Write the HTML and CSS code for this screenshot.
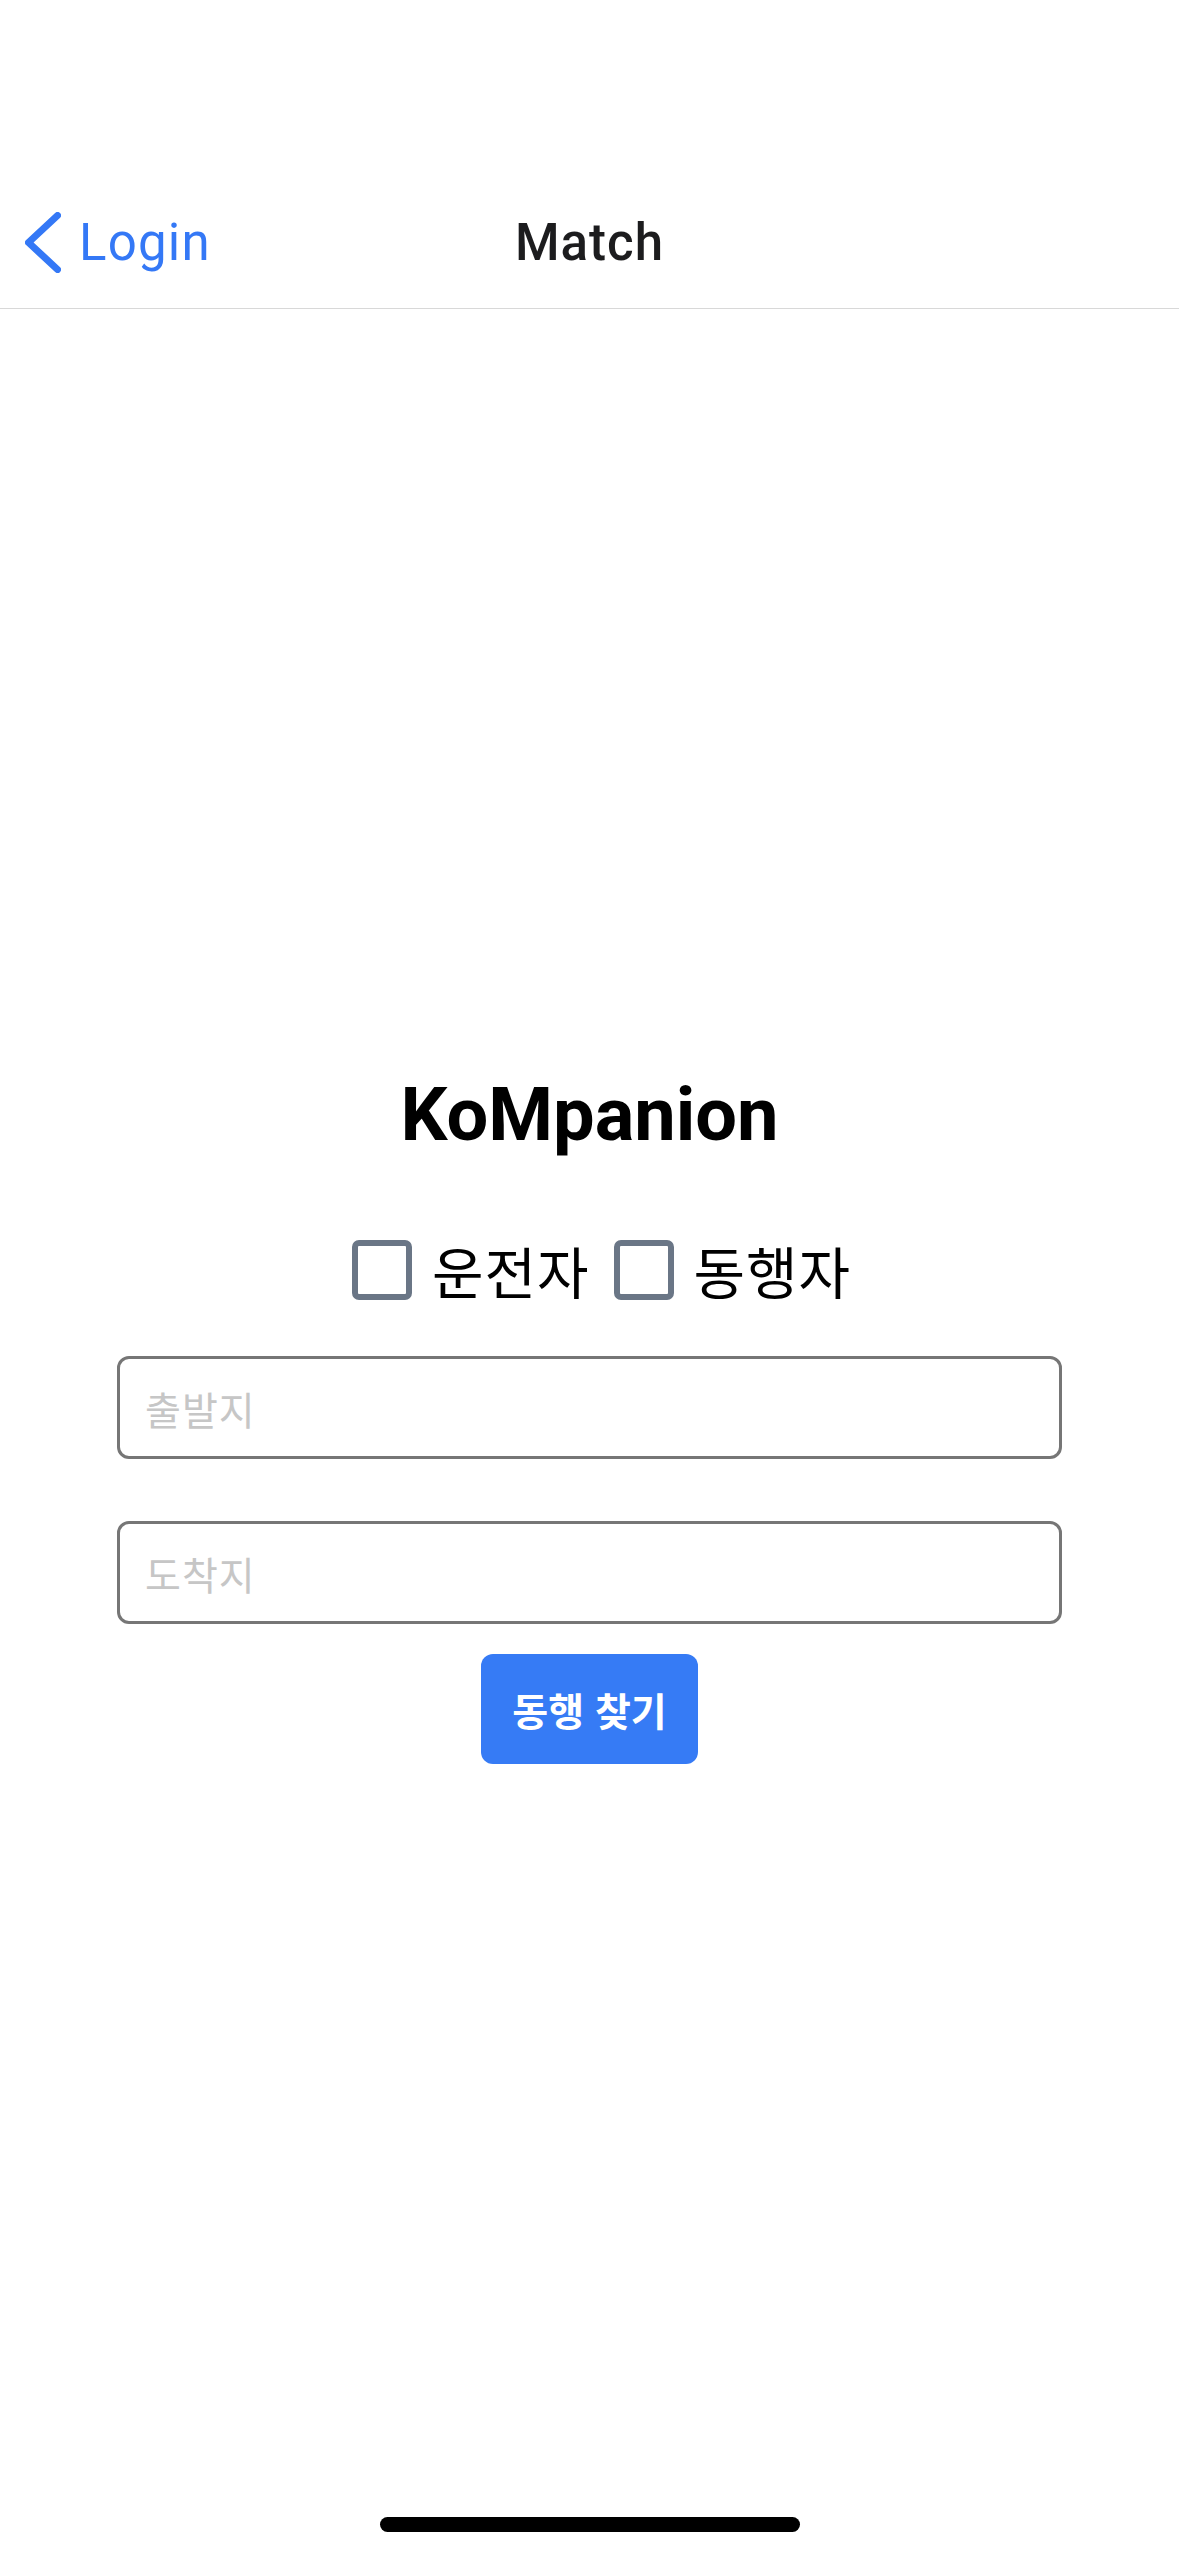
FILE: index.html
```html
<!DOCTYPE html>
<html lang="ko">
<head>
<meta charset="utf-8">
<title>Match</title>
<link rel="stylesheet" href="styles.css">
</head>
<body>
<div class="screen">
  <div class="status-bar"></div>
  <header class="nav">
    <a class="back">
      <svg class="chevron" width="36" height="61" viewBox="0 0 36 61" aria-hidden="true">
        <path d="M32.5 3.5 L3.5 30.5 L32.5 57.5" fill="none" stroke="#3478f6" stroke-width="7" stroke-linecap="round" stroke-linejoin="round"/>
      </svg>
      <span>Login</span>
    </a>
    <h1 class="nav-title">Match</h1>
    <span class="nav-spacer"></span>
  </header>
  <main class="content">
    <h2 class="brand">KoMpanion</h2>
    <div class="roles">
      <label class="role"><span class="box"></span><span class="role-text">운전자</span></label>
      <label class="role"><span class="box"></span><span class="role-text">동행자</span></label>
    </div>
    <input class="field field-from" type="text" placeholder="출발지">
    <input class="field field-to" type="text" placeholder="도착지">
    <button class="find" type="button">동행 찾기</button>
  </main>
  <div class="home-indicator"></div>
</div>
</body>
</html>
```
FILE: styles.css
```css
html, body {
  margin: 0;
  padding: 0;
  background: #ffffff;
}

.screen {
  position: relative;
  width: 1179px;
  height: 2556px;
  display: flex;
  flex-direction: column;
  background: #ffffff;
  font-family: Roboto, "Noto Sans CJK KR", sans-serif;
}

.status-bar {
  height: 177px;
  flex: none;
}

.nav {
  flex: none;
  height: 131px;
  border-bottom: 1px solid #d8d8d8;
  display: grid;
  grid-template-columns: 1fr auto 1fr;
  align-items: center;
}

.back {
  display: flex;
  align-items: center;
  gap: 18px;
  padding-left: 25px;
  color: #3478f6;
  font-family: Roboto, sans-serif;
  font-size: 51px;
  letter-spacing: 1.2px;
  font-weight: 400;
  text-decoration: none;
}

.chevron {
  display: block;
  flex: none;
}

.nav-title {
  margin: 0;
  font-family: Roboto, sans-serif;
  font-size: 51px;
  letter-spacing: 1px;
  font-weight: 500;
  color: #1c1c1e;
}

.content {
  flex: 1;
  display: flex;
  flex-direction: column;
  align-items: center;
  justify-content: center;
  padding-bottom: 30px;
}

.brand {
  margin: 0;
  font-family: Roboto, sans-serif;
  font-size: 74px;
  line-height: 88px;
  font-weight: 700;
  color: #000000;
}

.roles {
  margin-top: 81px;
  display: flex;
  gap: 24px;
  padding-left: 24px;
}

.role {
  display: flex;
  align-items: center;
  gap: 20px;
}

.box {
  width: 60px;
  height: 60px;
  box-sizing: border-box;
  border: 6px solid #6a7686;
  border-radius: 7px;
}

.role-text {
  font-family: "Noto Sans CJK KR", sans-serif;
  font-size: 56px;
  line-height: 60px;
  letter-spacing: 1px;
  color: #000000;
}

.field {
  width: 945px;
  height: 103px;
  box-sizing: border-box;
  border: 3px solid #767676;
  border-radius: 12px;
  padding: 0 25px;
  font-family: "Noto Sans CJK KR", sans-serif;
  font-size: 39px;
  letter-spacing: 1px;
  color: #000000;
  background: #ffffff;
  outline: none;
}

.field::placeholder {
  color: #c6c6c6;
}

.field-from {
  margin-top: 56px;
}

.field-to {
  margin-top: 62px;
}

.find {
  margin-top: 30px;
  width: 217px;
  height: 110px;
  border: none;
  border-radius: 12px;
  background: #367bf5;
  color: #ffffff;
  font-family: "Noto Sans CJK KR", sans-serif;
  font-size: 39px;
  font-weight: 700;
  letter-spacing: 0;
  padding: 0;
}

.home-indicator {
  position: absolute;
  left: 50%;
  bottom: 24px;
  width: 420px;
  height: 15px;
  margin-left: -210px;
  border-radius: 8px;
  background: #000000;
}
```
